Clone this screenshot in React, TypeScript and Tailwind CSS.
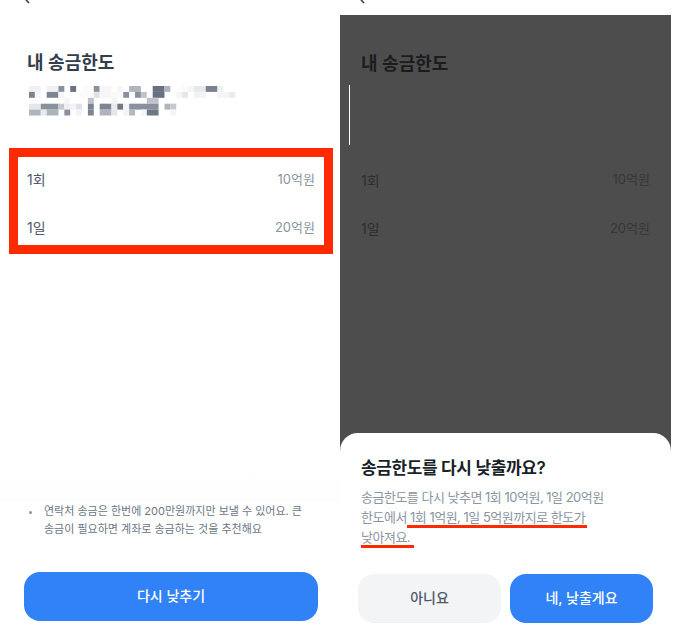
const fontStack = 'font-["Inter","Noto_Sans_CJK_KR",sans-serif]'

// blurred-out text under the title: [row, column, span, colour]
const mosaicCells: [number, number, number, string][] = [
  [0, 0, 2, '#f0f1f3'], [0, 3, 2, '#f0f1f3'], [0, 5, 1, '#8a919e'], [0, 7, 1, '#6b7280'],
  [0, 9, 2, '#fcfcfc'], [0, 11, 1, '#8a919e'], [0, 12, 2, '#f6f6f7'], [0, 15, 1, '#f6f6f7'],
  [0, 17, 2, '#b0b4bd'], [0, 21, 2, '#677180'], [0, 23, 1, '#b0b4bd'], [0, 26, 1, '#fafafa'],
  [0, 27, 1, '#f6f6f7'], [0, 28, 2, '#e8e9ec'], [0, 30, 2, '#7a8290'], [0, 32, 1, '#f0f1f3'],
  [1, 0, 1, '#7a8290'], [1, 1, 1, '#f6f6f7'], [1, 3, 2, '#7d8592'], [1, 5, 1, '#f6f6f7'],
  [1, 8, 3, '#fcfcfc'], [1, 11, 1, '#e0e2e5'], [1, 12, 2, '#f6f6f7'], [1, 14, 2, '#fafafa'],
  [1, 16, 1, '#8a919e'], [1, 18, 1, '#8a919e'], [1, 19, 1, '#c0c3c9'], [1, 21, 2, '#677180'],
  [1, 25, 1, '#f6f6f7'], [1, 26, 1, '#e5e6e9'], [1, 28, 2, '#f2f3f4'], [1, 32, 2, '#f3f4f5'],
  [1, 34, 1, '#eaebed'],
  [2, 6, 1, '#f6f6f7'], [2, 10, 1, '#bcc0c7'], [2, 14, 1, '#f4f4f5'], [2, 20, 2, '#c0c3c9'],
  [3, 0, 2, '#e5e6e9'], [3, 2, 3, '#8a919e'], [3, 5, 1, '#c5c8ce'], [3, 6, 1, '#eeeff1'],
  [3, 7, 1, '#f2f3f4'], [3, 8, 1, '#e0e2e5'], [3, 10, 1, '#7d8592'], [3, 12, 2, '#7d8592'],
  [3, 14, 1, '#e8e9ec'], [3, 15, 1, '#6f7886'], [3, 16, 1, '#f6f6f7'], [3, 17, 5, '#8a919e'],
  [3, 23, 1, '#b0b4bd'], [3, 24, 1, '#c5c8ce'],
  [4, 0, 2, '#b0b4bd'], [4, 2, 1, '#e8e9ec'], [4, 3, 2, '#aeb2ba'], [4, 6, 1, '#8a919e'],
  [4, 8, 1, '#f3f4f5'], [4, 10, 1, '#7d8592'], [4, 12, 2, '#aeb2ba'], [4, 14, 1, '#e5e6e9'],
  [4, 16, 1, '#f3f4f5'], [4, 17, 1, '#b5b8c0'], [4, 19, 1, '#f6f6f7'], [4, 20, 2, '#6f7886'],
  [4, 24, 1, '#f3f4f5'],
]

function Mosaic() {
  return (
    <svg width="207" height="30" viewBox="0 0 207 30" className="block">
      {mosaicCells.map(([row, col, span, fill], i) => (
        <rect key={i} x={col * 5.89} y={row * 5.9} width={span * 5.89} height={5.9} fill={fill} />
      ))}
    </svg>
  )
}

// only the tip of the back arrow is left at the top of the crop
function BackTip() {
  return (
    <svg width="6" height="4" viewBox="0 0 6 4" className="block">
      <path d="M1 0 L4 3" stroke="#333d4b" strokeWidth="1.6" fill="none" />
    </svg>
  )
}

function LeftPanel() {
  return (
    <div className="w-[340px] h-[627px] shrink-0 flex flex-col bg-white">
      <div className="pl-[25px] h-[51px]">
        <BackTip />
      </div>
      <h1 className="pl-[27px] text-[18px] leading-[24px] font-semibold text-[#333d4b]">내 송금한도</h1>
      <div className="pl-[29px] mt-[11px]">
        <Mosaic />
      </div>
      <div className="ml-[9px] mt-[32px] w-[324px] h-[106px] border-[9px] border-[#ff2a00] flex flex-col gap-[12px] pt-[4px] text-[14px]">
        <div className="flex justify-between items-center px-[9px] h-[36px]">
          <span className="text-[#4e5968]">1회</span>
          <span className="mt-[1px] text-[13px] text-[#8b95a1]">10억원</span>
        </div>
        <div className="flex justify-between items-center px-[9px] h-[36px]">
          <span className="text-[#4e5968]">1일</span>
          <span className="mt-[1px] text-[13px] text-[#8b95a1]">20억원</span>
        </div>
      </div>
      <div className="flex-1 flex flex-col justify-end">
        <div className="h-[33px] bg-gradient-to-b from-white to-[#fdfdfd]" />
        <div className="flex pl-[29px] pr-[20px] text-[11px] leading-[18px] text-[#6b7684]">
          <span className="w-[3px] h-[3px] mt-[9px] mr-[12px] shrink-0 rounded-full bg-[#8b95a1]" />
          <p>
            연락처 송금은 한번에 200만원까지만 보낼 수 있어요. 큰
            <br />
            송금이 필요하면 계좌로 송금하는 것을 추천해요
          </p>
        </div>
      </div>
      <button className="mx-[24px] mt-[34px] mb-[6px] h-[49px] w-[294px] pb-[2px] rounded-2xl bg-[#3182f6] text-white text-[14px] font-medium">
        다시 낮추기
      </button>
    </div>
  )
}

function RightPanel() {
  return (
    <div className="w-[331px] h-[627px] shrink-0 flex flex-col bg-white">
      <div className="h-[15px] pl-[20px]">
        <BackTip />
      </div>
      <div className="flex-1 flex flex-col bg-[#4d4d4d]">
        <div className="flex-1">
          <h1 className="pl-[21px] pt-[37px] text-[18px] leading-[24px] font-semibold text-[#1a1c20]">내 송금한도</h1>
          <div className="ml-[9px] mt-[9px] w-[1px] h-[60px] bg-white" />
          <div className="mt-[12px] px-[21px] text-[14px]">
            <div className="flex justify-between items-center h-[46px]">
              <span className="text-[#2b2d31]">1회</span>
              <span className="text-[13px] text-[#35373b]">10억원</span>
            </div>
            <div className="flex justify-between items-center h-[46px] mt-[2px]">
              <span className="text-[#2b2d31]">1일</span>
              <span className="mt-[1px] text-[13px] text-[#35373b]">20억원</span>
            </div>
          </div>
        </div>
        <div className="h-[194px] bg-white rounded-t-[18px] flex flex-col">
          <h2 className="pl-[21px] pt-[23px] text-[17px] leading-[24px] font-semibold tracking-[-0.4px] text-[#191f28]">
            송금한도를 다시 낮출까요?
          </h2>
          <p className="pl-[21px] mt-[7px] text-[13px] leading-[20px] tracking-[-0.5px] text-[#8b95a1]">
            송금한도를 다시 낮추면 1회 10억원, 1일 20억원
            <br />
            한도에서<span className="border-b-[3px] border-[#ff2a00] pr-[2px]"> 1회 1억원, 1일 5억원까지로 한도가</span>
            <br />
            <span className="border-b-[3px] border-[#ff2a00] pr-[4px]">낮아져요.</span>
          </p>
          <div className="flex gap-[9px] pl-[18px] mt-[27px]">
            <button className="w-[143px] h-[49px] pb-[2px] rounded-2xl bg-[#f2f4f6] text-[#4e5968] text-[14px] font-medium">
              아니요
            </button>
            <button className="w-[143px] h-[49px] pb-[2px] rounded-2xl bg-[#3182f6] text-white text-[14px] font-medium">
              네, 낮출게요
            </button>
          </div>
        </div>
      </div>
    </div>
  )
}

export default function App() {
  return (
    <div className={`flex w-[677px] h-[627px] overflow-hidden bg-white ${fontStack}`}>
      <LeftPanel />
      <RightPanel />
    </div>
  )
}
